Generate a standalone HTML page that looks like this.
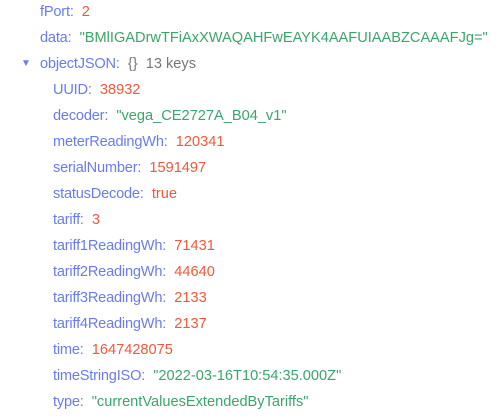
<!DOCTYPE html>
<html><head><style>
body{margin:0;width:503px;height:420px;background:#fff;font-family:"Liberation Sans",sans-serif;font-size:14.6px;overflow:hidden}
.r{position:absolute;height:26px;line-height:26px;white-space:nowrap}
.k{color:#6a7ced;letter-spacing:-0.2px}.s{color:#3ba56a}.n{color:#ef5a3c}.g{color:#777}
.c{color:#6a7ced;font-size:10px;position:absolute;left:-19px}
</style></head><body>
<div class="r" style="top:-1px;left:40px"><span class="k">fPort:</span>&nbsp; <span class="n">2</span></div>
<div class="r" style="top:25px;left:40px"><span class="k">data:</span>&nbsp; <span class="s">"BMlIGADrwTFiAxXWAQAHFwEAYK4AAFUIAABZCAAAFJg="</span></div>
<div class="r" style="top:51px;left:40px"><span class="c">▼</span><span class="k">objectJSON:</span>&nbsp; <span class="g">{}&nbsp; 13 keys</span></div>
<div class="r" style="top:77px;left:53px"><span class="k">UUID:</span>&nbsp; <span class="n">38932</span></div>
<div class="r" style="top:103px;left:53px"><span class="k">decoder:</span>&nbsp; <span class="s">"vega_CE2727A_B04_v1"</span></div>
<div class="r" style="top:129px;left:53px"><span class="k">meterReadingWh:</span>&nbsp; <span class="n">120341</span></div>
<div class="r" style="top:155px;left:53px"><span class="k">serialNumber:</span>&nbsp; <span class="n">1591497</span></div>
<div class="r" style="top:181px;left:53px"><span class="k">statusDecode:</span>&nbsp; <span class="n">true</span></div>
<div class="r" style="top:207px;left:53px"><span class="k">tariff:</span>&nbsp; <span class="n">3</span></div>
<div class="r" style="top:233px;left:53px"><span class="k">tariff1ReadingWh:</span>&nbsp; <span class="n">71431</span></div>
<div class="r" style="top:259px;left:53px"><span class="k">tariff2ReadingWh:</span>&nbsp; <span class="n">44640</span></div>
<div class="r" style="top:285px;left:53px"><span class="k">tariff3ReadingWh:</span>&nbsp; <span class="n">2133</span></div>
<div class="r" style="top:311px;left:53px"><span class="k">tariff4ReadingWh:</span>&nbsp; <span class="n">2137</span></div>
<div class="r" style="top:337px;left:53px"><span class="k">time:</span>&nbsp; <span class="n">1647428075</span></div>
<div class="r" style="top:363px;left:53px"><span class="k">timeStringISO:</span>&nbsp; <span class="s">"2022-03-16T10:54:35.000Z"</span></div>
<div class="r" style="top:389px;left:53px"><span class="k">type:</span>&nbsp; <span class="s">"currentValuesExtendedByTariffs"</span></div>
</body></html>
